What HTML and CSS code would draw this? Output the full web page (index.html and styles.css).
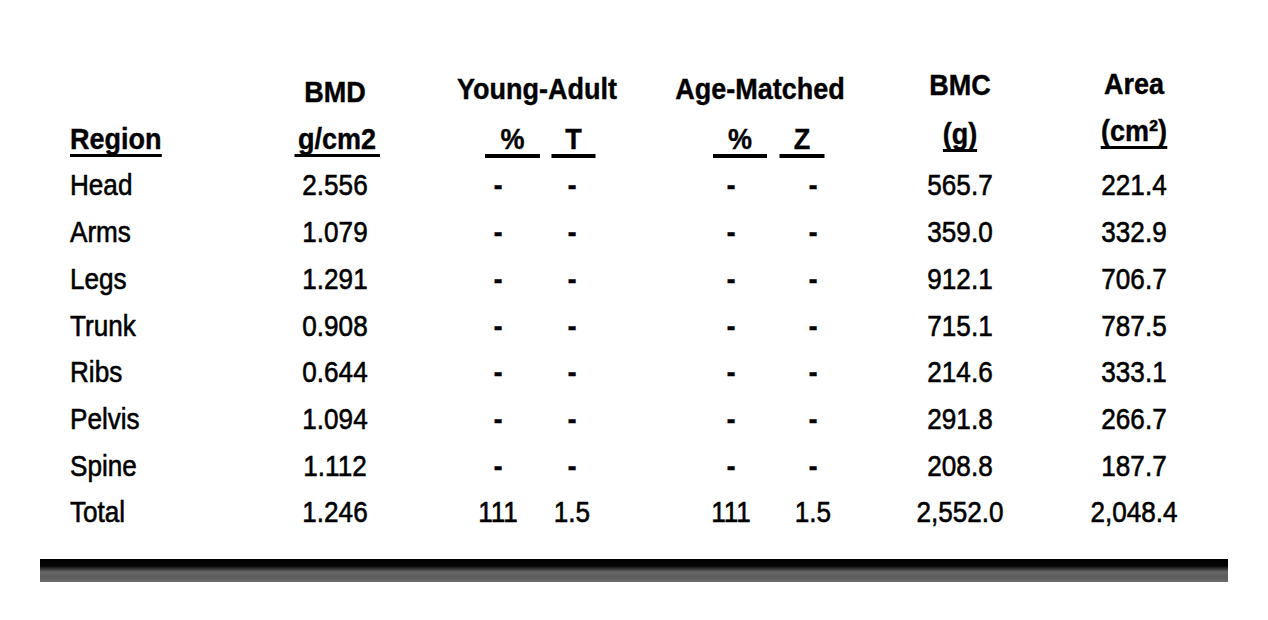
FILE: index.html
```html
<!DOCTYPE html>
<html lang="en">
<head>
<meta charset="utf-8">
<title>Body composition table</title>
<link rel="stylesheet" href="styles.css">
</head>
<body>
<div class="sheet">
  <div class="row h1">
    <span class="c-region"></span>
    <span class="c-bmd h-bmd">BMD</span>
    <span class="g-ya">Young-Adult</span>
    <span class="g-am">Age-Matched</span>
    <span class="h-bmc">BMC</span>
    <span class="c-area h-area">Area</span>
  </div>
  <div class="row h2">
    <span class="c-region"><span class="ul">Region</span></span>
    <span class="c-bmd"><span class="ul pad">g/cm2</span></span>
    <span class="ul thick u-yap">%</span>
    <span class="ul thick u-yat">T</span>
    <span class="ul thick u-amp">%</span>
    <span class="ul thick u-amz">Z</span>
    <span class="h2-bmc"><span class="ul">(g)</span></span>
    <span class="c-area h2-area"><span class="ul">(cm²)</span></span>
  </div>

  <div class="row data"><span class="c-region">Head</span><span class="c-bmd">2.556</span><span class="c-yap d">-</span><span class="c-yat d">-</span><span class="c-amp d">-</span><span class="c-amz d">-</span><span class="c-bmc">565.7</span><span class="c-area">221.4</span></div>
  <div class="row data"><span class="c-region">Arms</span><span class="c-bmd">1.079</span><span class="c-yap d">-</span><span class="c-yat d">-</span><span class="c-amp d">-</span><span class="c-amz d">-</span><span class="c-bmc">359.0</span><span class="c-area">332.9</span></div>
  <div class="row data"><span class="c-region">Legs</span><span class="c-bmd">1.291</span><span class="c-yap d">-</span><span class="c-yat d">-</span><span class="c-amp d">-</span><span class="c-amz d">-</span><span class="c-bmc">912.1</span><span class="c-area">706.7</span></div>
  <div class="row data"><span class="c-region">Trunk</span><span class="c-bmd">0.908</span><span class="c-yap d">-</span><span class="c-yat d">-</span><span class="c-amp d">-</span><span class="c-amz d">-</span><span class="c-bmc">715.1</span><span class="c-area">787.5</span></div>
  <div class="row data"><span class="c-region">Ribs</span><span class="c-bmd">0.644</span><span class="c-yap d">-</span><span class="c-yat d">-</span><span class="c-amp d">-</span><span class="c-amz d">-</span><span class="c-bmc">214.6</span><span class="c-area">333.1</span></div>
  <div class="row data"><span class="c-region">Pelvis</span><span class="c-bmd">1.094</span><span class="c-yap d">-</span><span class="c-yat d">-</span><span class="c-amp d">-</span><span class="c-amz d">-</span><span class="c-bmc">291.8</span><span class="c-area">266.7</span></div>
  <div class="row data"><span class="c-region">Spine</span><span class="c-bmd">1.112</span><span class="c-yap d">-</span><span class="c-yat d">-</span><span class="c-amp d">-</span><span class="c-amz d">-</span><span class="c-bmc">208.8</span><span class="c-area">187.7</span></div>
  <div class="row data"><span class="c-region">Total</span><span class="c-bmd">1.246</span><span class="c-yap">111</span><span class="c-yat">1.5</span><span class="c-amp">111</span><span class="c-amz">1.5</span><span class="c-bmc">2,552.0</span><span class="c-area">2,048.4</span></div>

  <div class="bar"></div>
</div>
</body>
</html>
```

FILE: styles.css
```css
html, body {
  margin: 0;
  padding: 0;
  background: #ffffff;
}

.sheet {
  width: 1268px;
  height: 620px;
  box-sizing: border-box;
  padding-top: 66px;
  font-family: "Liberation Sans", Arial, sans-serif;
  font-size: 30px;
  line-height: 46.7px;
  color: #000;
}

.row {
  display: flex;
  padding-left: 70px;
  white-space: nowrap;
}

.row > span {
  flex: none;
  text-align: center;
  transform: scaleX(0.87);
}

.data {
  -webkit-text-stroke: 0.6px #000;
}

.data > .d {
  font-weight: bold;
}

.h1, .h2 {
  font-weight: bold;
  -webkit-text-stroke: 0.4px #000;
}

.h1 > span, .h2 > span {
  transform: scaleX(0.9);
}

.row > .c-region {
  width: 220px;
  text-align: left;
  transform-origin: left center;
}
.c-bmd { width: 90px; }
.c-yap { width: 70px; margin-left: 83px; }
.c-yat { width: 78px; }
.c-amp { width: 80px; margin-left: 80px; }
.c-amz { width: 84px; }
.c-bmc { width: 110px; margin-left: 50px; }
.c-area { width: 110px; margin-left: 64px; }

/* first header line */
.h-bmd { margin-top: 3px; }
.g-ya { width: 182px; margin-left: 66px; }
.g-am { width: 190px; margin-left: 37px; }
.h-bmc { width: 110px; margin-left: 50px; margin-top: -4px; }
.h-area { margin-top: -5px; }

/* second header line: underlined units */
.h2 { align-items: flex-start; }

.ul {
  display: inline-block;
  line-height: 30px;
  margin-top: 8px;
  border-bottom: 3px solid #000;
}
.ul.thick { border-bottom-width: 4px; }
.row > span > .ul { margin-top: 0; }
.ul.pad { padding: 0 4px; }

.u-yap { width: 61px; margin-left: 102px; }
.u-yat { width: 49px; margin-left: 6px; }
.u-amp { width: 60px; margin-left: 112px; }
.u-amz { width: 50px; margin-left: 7px; }
.h2-bmc { width: 110px; margin-left: 78px; margin-top: -5px; }
.h2-area { margin-top: -8px; }

.bar {
  margin: 23px 0 0 40px;
  width: 1188px;
  height: 23px;
  background: linear-gradient(to bottom, #000 0, #050505 7px, #262626 9px, #686868 13px, #5a5a5a 18px, #6e6e6e 23px);
}
```
